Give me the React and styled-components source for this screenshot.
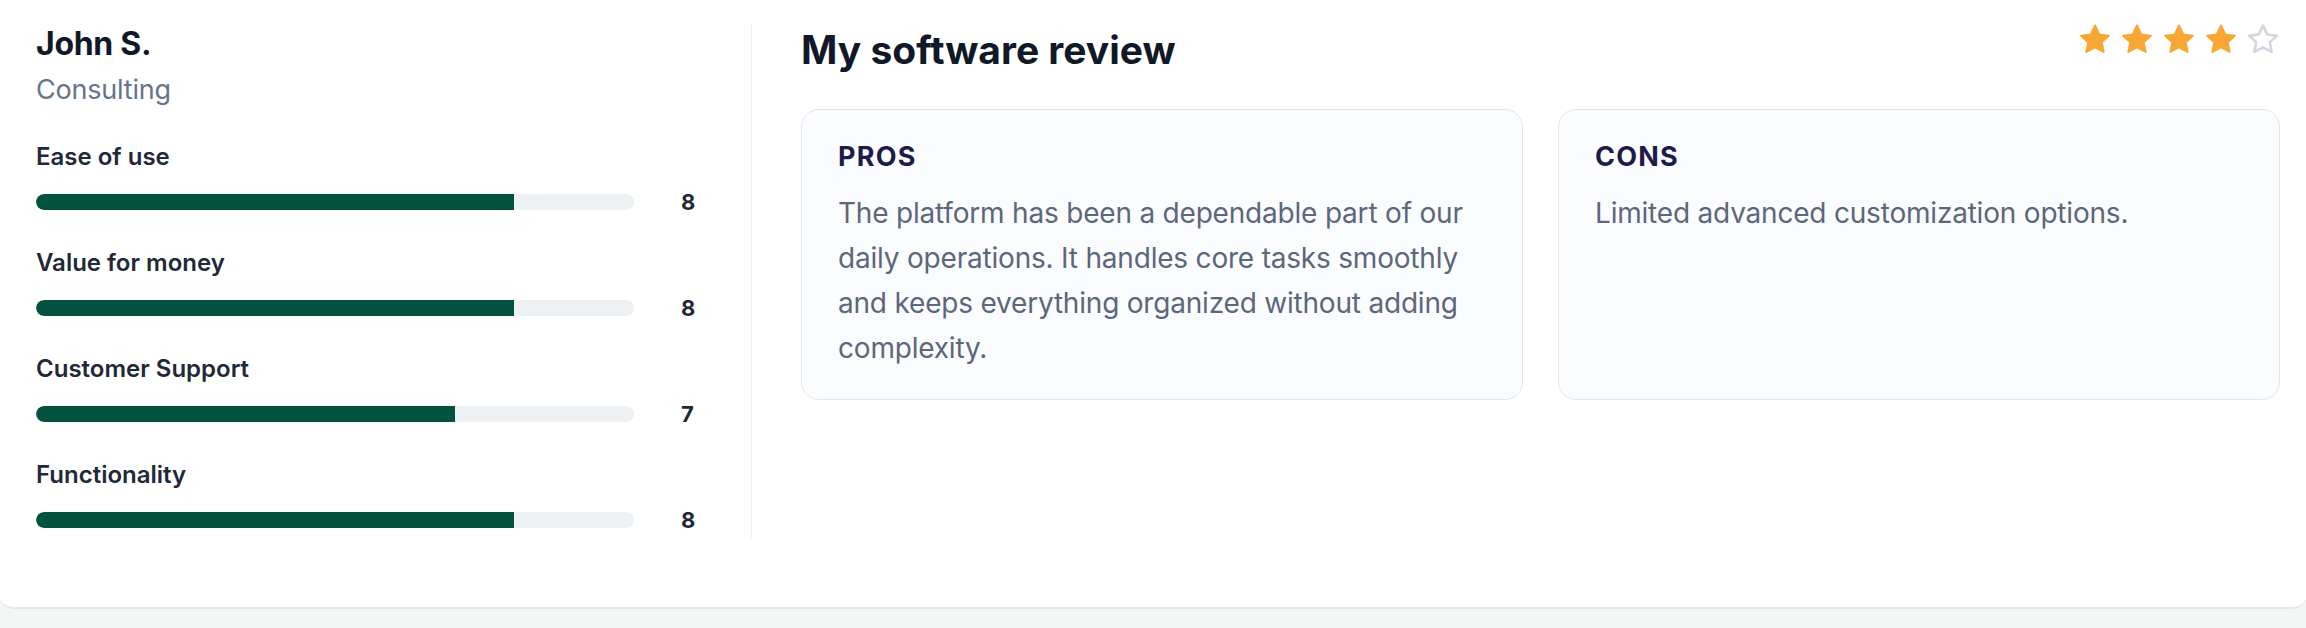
import React from "react";
import styled, { createGlobalStyle } from "styled-components";

const GlobalStyle = createGlobalStyle`
  html, body {
    margin: 0;
    padding: 0;
    background: #f4f6f5;
  }
  body {
    font-family: Inter, "Liberation Sans", sans-serif;
    -webkit-font-smoothing: antialiased;
  }
`;

const Page = styled.div`
  overflow: hidden;
  padding-bottom: 19px;
`;

const Card = styled.section`
  display: flex;
  margin: 0 -2px;
  padding: 24px 28px 69px 38px;
  background: #fff;
  border-bottom: 2px solid #e4e8e6;
  border-radius: 0 0 16px 16px;
`;

const Reviewer = styled.aside`
  width: 680px;
  padding-right: 35px;
  padding-bottom: 9px;
  border-right: 1px solid #eceff1;
`;

const Name = styled.h3`
  margin: 0;
  font-size: 32px;
  line-height: 40px;
  font-weight: 700;
  color: #111827;
  letter-spacing: -0.3px;
`;

const Industry = styled.div`
  margin-top: 8px;
  font-size: 27px;
  line-height: 36px;
  color: #67758a;
  letter-spacing: -0.2px;
`;

const Ratings = styled.div`
  margin-top: 34px;
  display: flex;
  flex-direction: column;
  gap: 37px;
`;

const Rating = styled.div`
  display: flex;
  flex-direction: column;
  gap: 21px;
`;

const Label = styled.div`
  font-size: 24px;
  line-height: 30px;
  font-weight: 600;
  color: #1f2937;
`;

const BarRow = styled.div`
  display: flex;
  align-items: center;
  height: 18px;
`;

const Track = styled.div`
  width: 598px;
  height: 16px;
  border-radius: 8px;
  background: #edf1f4;
  overflow: hidden;
`;

const Fill = styled.div`
  height: 100%;
  background: #03513f;
  border-radius: 8px 0 0 8px;
`;

const Score = styled.span`
  margin-left: 47px;
  font-size: 22px;
  font-weight: 700;
  color: #1f2937;
`;

const Review = styled.div`
  flex: 1;
  padding-left: 49px;
`;

const Header = styled.div`
  display: flex;
  justify-content: space-between;
  align-items: flex-start;
`;

const Title = styled.h2`
  margin: 0;
  padding-top: 2px;
  font-size: 39px;
  line-height: 48px;
  font-weight: 700;
  color: #111827;
`;

const Stars = styled.div`
  display: flex;
  gap: 8px;
  margin-top: -1px;
`;

const Columns = styled.div`
  display: grid;
  grid-template-columns: 1fr 1fr;
  gap: 35px;
  margin-top: 35px;
`;

const Box = styled.div`
  min-height: 285px;
  box-sizing: border-box;
  padding: 29px 36px 28px;
  background: #fbfcfe;
  border: 1px solid #e2e6ec;
  border-radius: 18px;
`;

const BoxTitle = styled.div`
  font-size: 27px;
  line-height: 36px;
  font-weight: 700;
  color: #1e1b4b;
  letter-spacing: 1.2px;
`;

const BoxText = styled.p`
  margin: 16px 0 0;
  font-size: 28px;
  line-height: 45px;
  color: #5c677b;
  letter-spacing: -0.2px;
`;

const Star = ({ filled }) => (
  <svg width="34" height="33" viewBox="0 0 24 23">
    <path
      d="M12 1.6l3 6.3 6.8.9-5 4.7 1.3 6.8L12 17l-6.1 3.3 1.3-6.8-5-4.7 6.8-.9z"
      fill={filled ? "#f7a734" : "none"}
      stroke={filled ? "#f7a734" : "#d3d6de"}
      strokeWidth={filled ? 1.4 : 1.8}
      strokeLinejoin="round"
    />
  </svg>
);

const ratings = [
  { label: "Ease of use", score: 8 },
  { label: "Value for money", score: 8 },
  { label: "Customer Support", score: 7 },
  { label: "Functionality", score: 8 },
];

export default function App() {
  return (
    <Page>
      <GlobalStyle />
      <Card>
        <Reviewer>
          <Name>John S.</Name>
          <Industry>Consulting</Industry>
          <Ratings>
            {ratings.map((r) => (
              <Rating key={r.label}>
                <Label>{r.label}</Label>
                <BarRow>
                  <Track>
                    <Fill style={{ width: `${r.score * 10}%` }} />
                  </Track>
                  <Score>{r.score}</Score>
                </BarRow>
              </Rating>
            ))}
          </Ratings>
        </Reviewer>
        <Review>
          <Header>
            <Title>My software review</Title>
            <Stars>
              {[1, 2, 3, 4, 5].map((n) => (
                <Star key={n} filled={n <= 4} />
              ))}
            </Stars>
          </Header>
          <Columns>
            <Box>
              <BoxTitle>PROS</BoxTitle>
              <BoxText>
                The platform has been a dependable part of our daily
                operations. It handles core tasks smoothly and keeps everything
                organized without adding complexity.
              </BoxText>
            </Box>
            <Box>
              <BoxTitle>CONS</BoxTitle>
              <BoxText>Limited advanced customization options.</BoxText>
            </Box>
          </Columns>
        </Review>
      </Card>
    </Page>
  );
}
